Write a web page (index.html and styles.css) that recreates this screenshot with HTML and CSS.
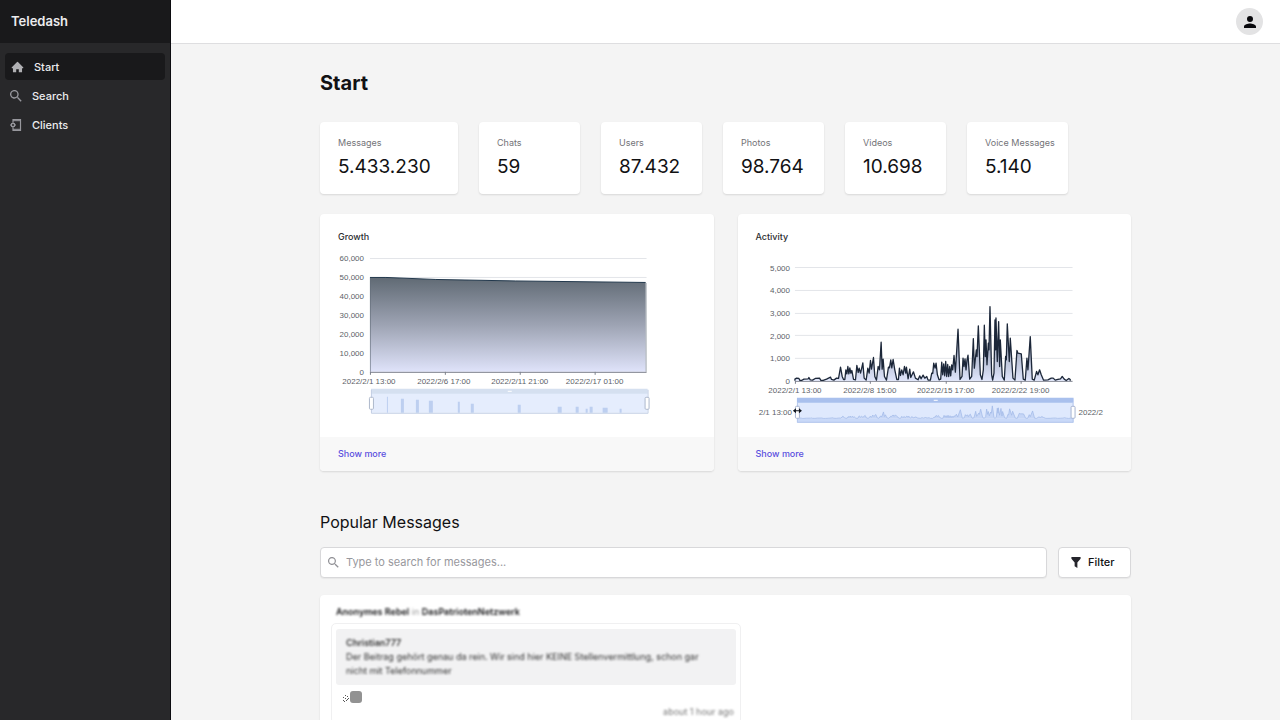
FILE: index.html
```html
<!DOCTYPE html>
<html lang="en">
<head>
<meta charset="utf-8">
<meta name="viewport" content="width=device-width, initial-scale=1">
<title>Teledash</title>
<link rel="stylesheet" href="styles.css">
</head>
<body>
<div class="app">
  <aside class="sidebar">
    <div class="brand">Teledash</div>
    <nav class="nav">
      <a class="nav-link active" href="#start">
        <svg class="nav-icon home" viewBox="0 0 20 20"><path d="M10.7 2.3a1 1 0 0 0-1.4 0l-8 8A1 1 0 0 0 2 12h1v6h5v-4.500h4V18h5v-6h1a1 1 0 0 0 .7-1.700z" fill="currentColor"/></svg>
        <span>Start</span>
      </a>
      <a class="nav-link search" href="#search">
        <svg class="nav-icon" viewBox="3 3 18 18"><path d="M15.500 14h-.79l-.28-.27a6.500 6.500 0 1 0-.7.700l.27.280v.79l5 5 1.500-1.500zM9.500 14a4.500 4.500 0 1 1 0-9 4.500 4.500 0 0 1 0 9z" fill="currentColor"/></svg>
        <span>Search</span>
      </a>
      <a class="nav-link clients" href="#clients">
        <svg class="nav-icon" viewBox="0 1 12 12" fill="none" stroke="currentColor"><path d="M3 4V1.700h7.500v10.600H3V10" stroke-width="1.200"/><path d="M3 11.300h7.500M3 2.700h7.500"/><circle cx="3" cy="7" r="1.700" stroke-width="1.300"/><path d="M3 4v1M3 9v1M0 7h1M5 7h1M1 5l.7.7M5 5l-.7.7M1 9l.7-.7M5 9l-.7-.7"/></svg>
        <span>Clients</span>
      </a>
    </nav>
  </aside>
  <div class="page">
    <header class="topbar">
      <button class="avatar" type="button" aria-label="Account">
        <svg viewBox="4 4 16 16"><path d="M12 12a4 4 0 1 0 0-8 4 4 0 0 0 0 8zm0 2c-2.700 0-8 1.300-8 4v2h16v-2c0-2.700-5.300-4-8-4z" fill="#08080c"/></svg>
      </button>
    </header>
    <main class="content">
      <h1>Start</h1>
      <section class="stats" aria-label="Statistics">
        <div class="card stat"><span>Messages</span><strong>5.433.230</strong></div>
        <div class="card stat"><span>Chats</span><strong>59</strong></div>
        <div class="card stat"><span>Users</span><strong>87.432</strong></div>
        <div class="card stat"><span>Photos</span><strong>98.764</strong></div>
        <div class="card stat"><span>Videos</span><strong>10.698</strong></div>
        <div class="card stat"><span>Voice Messages</span><strong>5.140</strong></div>
      </section>
      <section class="charts">
        <article class="card chart-card">
          <h2>Growth</h2>
          <svg class="chart" viewBox="320 247 394 190" role="img" aria-label="Growth chart">
            <defs>
              <linearGradient id="growthFill" x1="0" y1="0" x2="0" y2="1"><stop offset="0" stop-color="#606a74"/><stop offset=".5" stop-color="#9da3b3"/><stop offset="1" stop-color="#dfe3fa"/></linearGradient>
            </defs>
            <path class="grid" d="M370 258.500h277M370 277.500h277"/>
            <path d="M370 277.500h16l50 2 80 1.500 130 1.500V372H370z" fill="url(#growthFill)"/>
            <path d="M370 277.500h16l50 2 80 1.500 130 1.500" fill="none" stroke="#22384c"/>
            <path d="M370.500 278v94M646.500 283v89" fill="none" stroke="#626b79" stroke-width=".6"/>
            <path class="axis" d="M370 372.500h277M370.500 372v3M445.500 372v3M520.500 372v3M595.500 372v3"/>
            <g class="label end"><text x="364" y="261">60,000</text><text x="364" y="280">50,000</text><text x="364" y="299">40,000</text><text x="364" y="318">30,000</text><text x="364" y="337">20,000</text><text x="364" y="356">10,000</text><text x="364" y="375">0</text></g>
            <g class="label mid"><text x="369" y="384">2022/2/1 13:00</text><text x="444" y="384">2022/2/6 17:00</text><text x="520" y="384">2022/2/11 21:00</text><text x="595" y="384">2022/2/17 01:00</text></g>
            <path fill="#e5edfd" d="M371 390h277v23H371z"/>
            <path fill="#d5e0f0" d="M371 389h277v5H371z"/>
            <path d="M508 391.500h4" stroke="#fff"/>
            <path fill="#bdcff0" d="M387 397h1v16h-1zM401 399h3v14h-3zM416 400h3v13h-3zM429 401h4v12h-4zM458 402h2v11h-2zM471 404h3v9h-3zM518 405h3v8h-3zM558 407h4v6h-4zM576 407h3v6h-3zM586 409h2v4h-2zM590 407h3v6h-3zM603 408h5v5h-5zM620 409h2v4h-2z"/>
            <path d="M371.500 390v23.500h277V390" fill="none" stroke="#c4d0e5"/>
            <g fill="#fff" stroke="#aeb8cb"><rect x="369.500" y="397.500" width="4" height="12" rx="1"/><rect x="645.500" y="397.500" width="4" height="12" rx="1"/></g>
          </svg>
          <footer><a href="#growth">Show more</a></footer>
        </article>
        <article class="card chart-card">
          <h2>Activity</h2>
          <svg class="chart" viewBox="738 247 394 190" role="img" aria-label="Activity chart">
            <defs>
              <linearGradient id="activityFill" gradientUnits="userSpaceOnUse" x1="0" y1="290" x2="0" y2="513"><stop offset="0" stop-color="#556071"/><stop offset=".5" stop-color="#9ca5b9"/><stop offset="1" stop-color="#dfe5fb"/></linearGradient>
              <path id="activitySeries" vector-effect="non-scaling-stroke" d="M195 513V508L200 505 207 506 210 512 215 512 222 508 235 507 237 503 241 510 248 511 256 506 269 505 273 512 280 512 290 508 302 502 305 509 312 511 320 505 326 506 332 472 337 500 341 509 345 509 348 480 351 492 354 470 357 492 360 474 363 490 366 482 371 509 377 510 381 467 385 488 388 475 392 490 395 478 399 459 403 505 409 511 414 475 418 490 422 452 425 478 431 443 435 500 440 511 445 470 449 480 454 397 457 478 460 448 464 500 470 511 476 472 479 474 483 450 486 474 490 449 495 480 501 509 506 509 509 475 512 497 516 480 520 495 524 470 528 490 530 472 535 507 540 478 543 503 551 486 557 505 565 510 570 498 574 507 580 496 585 505 591 500 595 511 602 511 606 490 609 491 612 460 616 475 619 460 623 495 628 510 633 508 636 457 639 495 642 462 645 498 648 455 651 500 654 464 657 500 660 470 663 498 666 465 669 480 673 437 677 487 685 358 691 509 697 500 700 445 703 470 706 447 709 480 712 450 715 436 720 508 726 500 731 386 734 475 740 420 742 440 746 348 752 495 757 509 761 480 764 346 767 440 769 390 772 465 776 400 778 420 781 290 786 495 789 511 793 490 796 330 798 420 799 324 803 455 807 335 810 470 812 390 818 500 824 511 828 440 830 450 833 342 839 455 842 385 850 505 856 511 862 422 865 430 875 432 881 508 887 511 892 445 895 480 902 380 908 508 914 511 921 485 925 495 930 480 935 495 942 511 955 510 965 505 971 505 977 511 985 509 993 507 998 500 1004 508 1010 512 1018 506 1022 509V513"/>
            </defs>
            <path class="grid" d="M795 267.500h278M795 290.500h278M795 313.500h278M795 335.500h278M795 358.500h278"/>
            <path class="axis" d="M795 381.500h278M795.500 381v3M870.500 381v3M946.500 381v3M1021.500 381v3"/>
            <g transform="translate(730 210) scale(.3333)"><use href="#activitySeries" fill="url(#activityFill)" stroke="#1c2739" stroke-width="1.300" stroke-linejoin="round"/></g>
            <path d="M924 243.500h2" stroke="#888"/>
            <g class="label end"><text x="790" y="271">5,000</text><text x="790" y="293">4,000</text><text x="790" y="316">3,000</text><text x="790" y="339">2,000</text><text x="790" y="361">1,000</text><text x="790" y="384">0</text></g>
            <g class="label mid"><text x="795" y="393">2022/2/1 13:00</text><text x="870" y="393">2022/2/8 15:00</text><text x="946" y="393">2022/2/15 17:00</text><text x="1021" y="393">2022/2/22 19:00</text></g>
            <path fill="#dfe9fd" d="M797 399h277v24H797z"/>
            <path fill="#c9d9f8" d="M797 419h277v4H797z"/>
            <g transform="translate(730 210) scale(.3333) translate(7 539) scale(1 .17)"><use href="#activitySeries" fill="#c6d6f6" stroke="#9fb7e6" stroke-width=".7"/></g>
            <path fill="#a9c0ed" d="M797 398h277v5H797z"/>
            <path d="M934 400.500h4" stroke="#fff"/>
            <path d="M797.500 403v19.500h276V403" fill="none" stroke="#b6c8ec"/>
            <g fill="#fff" stroke="#a7b4d0"><rect x="795.500" y="406.500" width="4" height="12" rx="1"/><rect x="1071.500" y="406.500" width="4" height="12" rx="1"/></g>
            <g class="label"><text class="range-start" x="792" y="415">2/1 13:00</text><text x="1079" y="415">2022/2</text></g>
            <path d="M793 411l3-2.500v2h3v-2l3 2.500-3 2.500v-2h-3v2z" fill="#10151d"/>
          </svg>
          <footer><a href="#activity">Show more</a></footer>
        </article>
      </section>
      <section class="popular">
        <h2>Popular Messages</h2>
        <form class="toolbar">
          <label class="search-box">
            <svg viewBox="3 3 18 18"><path d="M15.500 14h-.79l-.28-.27a6.500 6.500 0 1 0-.7.700l.27.280v.79l5 5 1.500-1.500zM9.500 14a4.500 4.500 0 1 1 0-9 4.500 4.500 0 0 1 0 9z" fill="#929297"/></svg>
            <input type="text" placeholder="Type to search for messages..." aria-label="Search messages">
          </label>
          <button class="filter" type="button">
            <svg viewBox="0 0 10 12"><path d="M0 0h10v2L6.500 6v6l-3-2V6L0 2z" fill="#25252c"/></svg>
            <span>Filter</span>
          </button>
        </form>
        <div class="card feed">
          <div class="feed-title redacted"><b>Anonymes Rebel</b> <span>in</span> <b>DasPatriotenNetzwerk</b></div>
          <article class="message">
            <blockquote><div class="redacted"><b>Christian777</b><br>Der Beitrag gehört genau da rein. Wir sind hier KEINE Stellenvermittlung, schon gar nicht mit Telefonnummer</div></blockquote>
            <div class="reaction"><svg viewBox="0 0 20 12"><path d="M1 10l1-1m0 2l1-1m0-2l1-1m0 3l1-1m-4-2l1-1m1-1l1-1m1 5l1-1m-1-2l1-1m0 3l1-1" stroke="#555"/><rect x="8" y="0" width="12" height="12" rx="3" fill="#929292"/></svg></div>
            <time class="redacted">about 1 hour ago</time>
          </article>
        </div>
      </section>
    </main>
  </div>
</div>
</body>
</html>
```

FILE: styles.css
```css
* { box-sizing: border-box; }
body { margin: 0; background: #f4f4f4; color: #111113; font-family: Inter, "Liberation Sans", sans-serif; font-size: 11px; }
h1, h2, blockquote { margin: 0; }
a { color: inherit; text-decoration: none; }
button { font: inherit; color: inherit; }
svg { display: block; flex: none; }

.app { display: flex; height: 100vh; overflow: hidden; }
.sidebar { flex: none; width: 171px; background: #28282a; border-right: 1px solid #0c0c10; color: #ececee; }
.brand { height: 43px; padding: 0 11px; background: #19191b; font-size: 13px; line-height: 43px; font-weight: 600; }
.nav { display: flex; flex-direction: column; gap: 2px; padding: 10px 5px; }
.nav-link { display: flex; align-items: center; gap: 10px; height: 27px; padding: 0 6px; border-radius: 4px; font-weight: 500; }
.nav-link.active { background: #19191b; }
.nav-icon { width: 12px; height: 12px; color: #97979d; }
.nav-icon.home { width: 13px; height: 14px; color: #b0b0b3; }
.nav-link.search { padding-left: 5px; }
.nav-link.clients { padding-left: 5px; }

.page { flex: 1; min-width: 0; }
.topbar { display: flex; align-items: center; justify-content: flex-end; height: 44px; padding: 0 17px; background: #fff; border-bottom: 1px solid #dedee0; }
.avatar { display: grid; place-items: center; width: 27px; height: 27px; padding: 0; border: 0; border-radius: 50%; background: #e3e3e4; }
.avatar svg { width: 12px; height: 12px; }

.content { max-width: 811px; margin: 0 auto; padding-top: 26px; }
h1 { font-size: 20px; line-height: 26px; font-weight: 700; }
.card { background: #fff; border-radius: 4px; box-shadow: 0 1px 2px #0000001f; }
.stats { display: grid; grid-template-columns: minmax(0, 138fr) repeat(5, minmax(0, 101fr)); gap: 21px; max-width: 748px; margin-top: 26px; }
.stat { display: flex; flex-direction: column; height: 72px; padding: 14px 0 0 18px; white-space: nowrap; }
.stat span { color: #737378; font-size: 9px; line-height: 14px; }
.stat strong { font-size: 19px; line-height: 34px; font-weight: 400; }

.charts { display: grid; grid-template-columns: repeat(2, minmax(0, 1fr)); gap: 24px; margin-top: 20px; }
.chart-card { overflow: hidden; }
.chart-card h2 { padding: 16px 18px 4px; font-size: 9px; line-height: 13px; font-weight: 500; color: #2d2d31; }
.chart { width: 100%; height: auto; }
.chart-card footer { padding: 10px 18px; background: #f8f8f8; color: #5b50df; font-size: 9px; line-height: 14px; font-weight: 500; }
.grid { fill: none; stroke: #e3e5e9; }
.axis { fill: none; stroke: #7c818d; }
.label { fill: #5c5f68; font-family: "Liberation Sans", sans-serif; font-size: 8px; }
.label.end, .range-start { text-anchor: end; }
.label.mid { text-anchor: middle; }

.popular h2 { margin-top: 41px; font-size: 16px; line-height: 20px; font-weight: 400; }
.toolbar { display: flex; gap: 11px; margin-top: 15px; }
.search-box, .filter { display: flex; align-items: center; height: 31px; background: #fff; border: 1px solid #d8d8da; border-radius: 4px; box-shadow: 0 1px 1px #0000000d; }
.search-box { flex: 1; gap: 7px; padding: 0 7px; }
.search-box svg { width: 11px; height: 11px; }
.search-box input { flex: 1; min-width: 0; padding: 0; border: 0; outline: 0; background: none; color: inherit; font: inherit; }
.search-box input::placeholder { color: #98989d; opacity: 1; }
.filter { gap: 7px; width: 73px; padding: 0 12px; font-weight: 500; }
.filter svg { width: 10px; height: 11px; }

.feed { margin-top: 17px; padding: 10px 11px; }
.feed-title { padding: 0 5px; font-size: 9px; line-height: 14px; }
.feed-title b { font-weight: 600; }
.feed-title span { color: #999; }
.redacted b { font-weight: 600; }
.redacted { filter: blur(1px); }
.message { display: flex; flex-direction: column; max-width: 410px; margin-top: 4px; padding: 5px 4px; border: 1px solid #f0f0f1; border-radius: 5px; }
.message blockquote { padding: 7px 20px 7px 10px; border-radius: 3px; background: #f2f2f3; font-size: 9px; line-height: 14px; color: #333; }
.reaction { padding: 6px 6px 3px; }
.reaction svg { width: 20px; height: 12px; }
.message time { align-self: flex-end; padding-right: 2px; font-size: 9px; line-height: 12px; color: #777; }
```
